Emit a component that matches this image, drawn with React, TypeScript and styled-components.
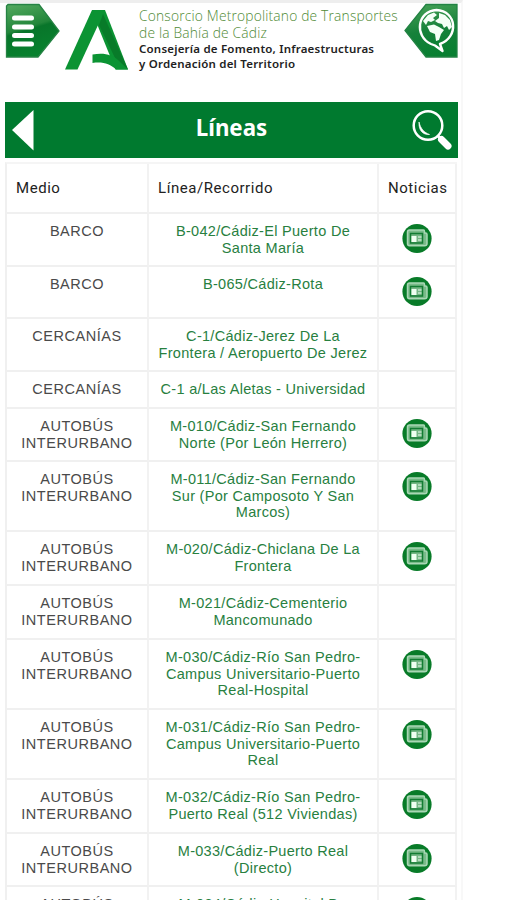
import React from 'react';
import styled, { createGlobalStyle } from 'styled-components';

const GlobalStyle = createGlobalStyle`
  * { box-sizing: border-box; }
  body { margin: 0; background: #fff; font-family: "Liberation Sans", Arial, sans-serif; }
`;

const Page = styled.main`
  width: 529px;
  height: 900px;
  overflow: hidden;
  background: #fff;
`;

const Phone = styled.div`
  width: 463px;
  height: 900px;
  padding: 0 4px 0 5px;
  border-top: 3px solid #eeeeee;
  border-right: 2px solid #f8f8f8;
  overflow: hidden;
`;

const Header = styled.header`
  display: flex;
  align-items: flex-start;
  height: 99px;

  svg { display: block; flex: none; }
`;

const Emblem = styled.svg`
  margin: 6px 0 0 4px;
`;

const Brand = styled.div`
  width: 265px;
  flex: none;
  margin: 4px 0 0 11px;
  font-family: "Noto Sans", sans-serif;
  white-space: nowrap;
`;

const Organisation = styled.div`
  width: max-content;
  font-family: "Open Sans", sans-serif;
  font-size: 13.8px;
  line-height: 17px;
  font-weight: 300;
  letter-spacing: 0.18px;
  color: #4f8a35;
`;

const Department = styled.div`
  width: max-content;
  font-size: 11.5px;
  line-height: 15px;
  font-weight: 600;
  letter-spacing: 0.21px;
  color: #222;
`;

const TitleBar = styled.div`
  display: grid;
  grid-template-columns: 50px 1fr 50px;
  align-items: center;
  width: 453px;
  height: 56px;
  background: #007a2f;

  svg { display: block; }
`;

const Title = styled.h1`
  margin: 0 0 4px;
  text-align: center;
  color: #fff;
  font: 700 22.3px/28px "Noto Sans", sans-serif;
`;

const Table = styled.div`
  width: 452px;
  margin: 4px 0 0 0;
  border-top: 2px solid #f5f5f5;
  border-left: 2px solid #f0f0f0;
`;

const Row = styled.div<{ $height: number }>`
  display: grid;
  grid-template-columns: 142px 230px 78px;
  height: ${(p) => p.$height}px;
`;

const Cell = styled.div<{ $green?: boolean }>`
  padding-top: 9px;
  border-right: 2px solid #f2f2f2;
  border-bottom: 2px solid #f0f0f0;
  text-align: center;
  white-space: nowrap;
  font-size: 14.5px;
  line-height: 16.7px;
  letter-spacing: ${(p) => (p.$green ? 0.3 : 0.53)}px;
  color: ${(p) => (p.$green ? '#28803f' : '#4a4a4a')};

  svg { display: block; margin: 0 auto; }
`;

const HeadCell = styled(Cell)`
  display: flex;
  align-items: center;
  padding: 0 0 0 9px;
  font-family: Roboto, sans-serif;
  font-size: 15px;
  font-weight: 400;
  letter-spacing: 0.55px;
  color: #222;
`;

const MenuIcon = () => (
  <svg width="56" height="57" viewBox="0 0 56 57">
    <defs>
      <linearGradient id="menuFill" x1="0" y1="0" x2="0.3" y2="1">
        <stop offset="0" stopColor="#55aa60" />
        <stop offset="0.5" stopColor="#22863a" />
        <stop offset="0.56" stopColor="#08752a" />
        <stop offset="1" stopColor="#08812e" />
      </linearGradient>
    </defs>
    <path d="M3 1.5H34L54 28L33 54H1.5V3Z" fill="url(#menuFill)" stroke="#268344" strokeWidth="1.3" />
    <g stroke="#fff" strokeWidth="5" strokeLinecap="round">
      <path d="M9.5 15H26.5M9.5 24H26.5M9.5 32.5H26.5M9.5 41H26.5" />
    </g>
  </svg>
);

const AndaluciaLogo = () => (
  <Emblem width="63" height="62" viewBox="0 0 63 62">
    <path d="M27 1H40L12.500 60.500H0Z" fill="#0b9333" />
    <path d="M27 1H40L63 60.500H50.500L32 15Z" fill="#0b9333" />
    <path d="M38 5L63 60.500L50.500 50L34 16Z" fill="#087b29" />
    <path d="M27.500 45.500C40 43.500 47 46 53 51L63 60.500H51C45 55 38 52.500 27.500 54Z" fill="#0b9333" />
  </Emblem>
);

const GlobeIcon = () => (
  <svg width="56" height="57" viewBox="0 0 56 57">
    <defs>
      <linearGradient id="globeFill" x1="0.3" y1="0" x2="0.5" y2="1">
        <stop offset="0" stopColor="#44a055" />
        <stop offset="0.5" stopColor="#16813a" />
        <stop offset="1" stopColor="#087f31" />
      </linearGradient>
    </defs>
    <path d="M22 1.500H53V54H22L1 27.500Z" fill="url(#globeFill)" stroke="#238344" strokeWidth="1.300" />
    <path d="M27 41C10 33 13 8 32.500 7C53 8 55 34 36 41L38.500 48L31 42.500Z" fill="none" stroke="#fff" strokeWidth="2.400" strokeLinejoin="round" />
    <path d="M19 18L24 12L30 9.500L33 12L29 15L31 17L27 19L24 18L22 22ZM35 10L41 12L46 17L48 24L45 27L43 23L40 25L38 21L34 20L31 18L35 15ZM23 23L30 21.500L35 24L40 27L37 31L35 37L32 38L31 31L26 29Z" fill="#f4fff6" />
  </svg>
);

const BackIcon = () => (
  <svg width="50" height="56" viewBox="0 0 50 56">
    <path d="M28.500 8V48.500L7 28Z" fill="#fff" />
  </svg>
);

const SearchIcon = () => (
  <svg width="50" height="56" viewBox="0 0 50 56">
    <circle cx="20" cy="23.500" r="14.300" fill="none" stroke="#fff" strokeWidth="2.500" />
    <path d="M11 20C10.500 28 14.500 33 21.500 32.500C16 30.500 12.500 26.500 11 20Z" fill="#fff" stroke="#fff" strokeWidth="0.700" />
    <path d="M29.500 33.500L34 38" stroke="#fff" strokeWidth="3" />
    <path d="M33.500 37.500L40 44" stroke="#fff" strokeWidth="7" strokeLinecap="round" />
  </svg>
);

const NewsIcon = () => (
  <svg width="30" height="31" viewBox="0 0 30 31">
    <circle cx="15" cy="15.500" r="14.600" fill="#087b28" />
    <path d="M7.500 7H21.500Q22.500 7 22.500 8.500V10H23.500Q25 10 25 11.500V20.500Q25 22.800 22.500 22.800H7.500Q5.500 22.800 5.500 20.500V9Q5.500 7 7.500 7Z" fill="#79bb89" stroke="#a9d7b5" strokeWidth="1.500" />
    <path d="M8.500 10.500H20.500V20H8.500Z" fill="#75b685" stroke="#137c33" strokeWidth="1.500" />
    <path d="M9.500 13H14.500V19H9.500Z" fill="#effff1" />
    <path d="M16 14H19.500M16 17H19.500" stroke="#c5e6cd" strokeWidth="1.600" />
  </svg>
);

interface Route {
  medio: string[];
  linea: string[];
  news: boolean;
  height: number;
}

const BUS = ['AUTOBÚS', 'INTERURBANO'];

const routes: Route[] = [
  { medio: ['BARCO'], linea: ['B-042/Cádiz-El Puerto De', 'Santa María'], news: true, height: 53 },
  { medio: ['BARCO'], linea: ['B-065/Cádiz-Rota'], news: true, height: 52 },
  { medio: ['CERCANÍAS'], linea: ['C-1/Cádiz-Jerez De La', 'Frontera / Aeropuerto De Jerez'], news: false, height: 53 },
  { medio: ['CERCANÍAS'], linea: ['C-1 a/Las Aletas - Universidad'], news: false, height: 37 },
  { medio: BUS, linea: ['M-010/Cádiz-San Fernando', 'Norte (Por León Herrero)'], news: true, height: 53 },
  { medio: BUS, linea: ['M-011/Cádiz-San Fernando', 'Sur (Por Camposoto Y San', 'Marcos)'], news: true, height: 70 },
  { medio: BUS, linea: ['M-020/Cádiz-Chiclana De La', 'Frontera'], news: true, height: 54 },
  { medio: BUS, linea: ['M-021/Cádiz-Cementerio', 'Mancomunado'], news: false, height: 54 },
  { medio: BUS, linea: ['M-030/Cádiz-Río San Pedro-', 'Campus Universitario-Puerto', 'Real-Hospital'], news: true, height: 70 },
  { medio: BUS, linea: ['M-031/Cádiz-Río San Pedro-', 'Campus Universitario-Puerto', 'Real'], news: true, height: 70 },
  { medio: BUS, linea: ['M-032/Cádiz-Río San Pedro-', 'Puerto Real (512 Viviendas)'], news: true, height: 54 },
  { medio: BUS, linea: ['M-033/Cádiz-Puerto Real', '(Directo)'], news: true, height: 53 },
  { medio: BUS, linea: ['M-034/Cádiz-Hospital De', 'Puerto Real'], news: true, height: 53 },
];

const Lines = ({ text }: { text: string[] }) => (
  <>{text.map((line) => <div key={line}>{line}</div>)}</>
);

export default function App() {
  return (
    <>
      <GlobalStyle />
      <Page>
        <Phone>
          <Header>
            <MenuIcon />
            <AndaluciaLogo />
            <Brand>
              <Organisation>Consorcio Metropolitano de Transportes</Organisation>
              <Organisation>de la Bahía de Cádiz</Organisation>
              <Department>Consejería de Fomento, Infraestructuras</Department>
              <Department>y Ordenación del Territorio</Department>
            </Brand>
            <GlobeIcon />
          </Header>
          <TitleBar>
            <BackIcon />
            <Title>Líneas</Title>
            <SearchIcon />
          </TitleBar>
          <Table>
            <Row $height={50}>
              <HeadCell>Medio</HeadCell>
              <HeadCell>Línea/Recorrido</HeadCell>
              <HeadCell>Noticias</HeadCell>
            </Row>
            {routes.map((route) => (
              <Row key={route.linea[0]} $height={route.height}>
                <Cell><Lines text={route.medio} /></Cell>
                <Cell $green><Lines text={route.linea} /></Cell>
                <Cell>{route.news && <NewsIcon />}</Cell>
              </Row>
            ))}
          </Table>
        </Phone>
      </Page>
    </>
  );
}
